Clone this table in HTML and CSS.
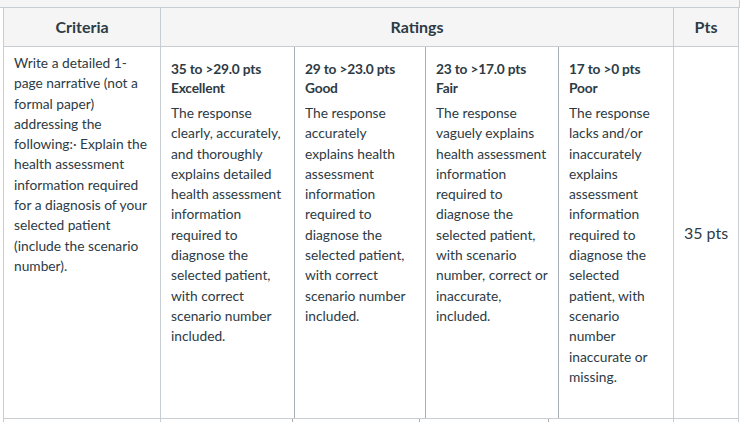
FILE: index.html
```html
<!DOCTYPE html>
<html lang="en">
<head>
<meta charset="utf-8">
<title>Rubric</title>
<link rel="stylesheet" href="styles.css">
</head>
<body>
<div class="strip"></div>
<table class="rubric">
  <thead>
    <tr>
      <th class="h-crit">Criteria</th>
      <th class="h-rat">Ratings</th>
      <th class="h-pts">Pts</th>
    </tr>
  </thead>
  <tbody>
    <tr>
      <td class="crit">Write a detailed 1-page narrative (not a formal paper) addressing the following:· Explain the health assessment information required for a diagnosis of your selected patient (include the scenario number).</td>
      <td class="ratings">
        <div class="tiers">
          <div class="tier t1">
            <div class="tier-title">35 to &gt;29.0 pts</div>
            <div class="tier-title">Excellent</div>
            <div class="tier-desc">The response clearly, accurately, and thoroughly explains detailed health assessment information required to diagnose the selected patient, with correct scenario number included.</div>
          </div>
          <div class="tier t2">
            <div class="tier-title">29 to &gt;23.0 pts</div>
            <div class="tier-title">Good</div>
            <div class="tier-desc">The response accurately explains health assessment information required to diagnose the selected patient, with correct scenario number included.</div>
          </div>
          <div class="tier t3">
            <div class="tier-title">23 to &gt;17.0 pts</div>
            <div class="tier-title">Fair</div>
            <div class="tier-desc">The response vaguely explains health assessment information required to diagnose the selected patient, with scenario number, correct or inaccurate, included.</div>
          </div>
          <div class="tier t4">
            <div class="tier-title">17 to &gt;0 pts</div>
            <div class="tier-title">Poor</div>
            <div class="tier-desc">The response lacks and/or inaccurately explains assessment information required to diagnose the selected patient, with scenario number inaccurate or missing.</div>
          </div>
        </div>
      </td>
      <td class="pts">35 pts</td>
    </tr>
    <tr class="next">
      <td class="crit"></td>
      <td class="ratings">
        <div class="tiers">
          <div class="tier n1"></div>
          <div class="tier n2"></div>
          <div class="tier n3"></div>
          <div class="tier n4"></div>
        </div>
      </td>
      <td class="pts"></td>
    </tr>
  </tbody>
</table>
</body>
</html>
```
FILE: styles.css
```css
* { box-sizing: border-box; }

body {
  margin: 0;
  background: #ffffff;
  font-family: Lato, "Open Sans", "Liberation Sans", sans-serif;
  color: #2d3b45;
  font-size: 13.75px;
}

.strip {
  width: 740px;
  height: 8px;
  background: #f5f5f5;
  border-right: 1px solid #c7cdd1;
  border-bottom: 1px solid #c7cdd1;
}

.rubric {
  margin-left: 3px;
  width: 736px;
  table-layout: fixed;
  border-spacing: 0;
  border-left: 1px solid #c7cdd1;
}

.rubric th,
.rubric td {
  border-right: 1px solid #c7cdd1;
  border-bottom: 1px solid #c7cdd1;
}

.rubric th {
  background: #f5f5f5;
  font-size: 16px;
  font-weight: 700;
  line-height: 22px;
  padding: 8px 10px;
  text-align: center;
}

.h-crit { width: 157px; }
.h-rat { width: 513px; }
.h-pts { width: 65px; }

.crit {
  vertical-align: top;
  padding: 6px 10px;
  line-height: 20.3px;
}

.ratings {
  vertical-align: top;
  padding: 0;
}

.tiers {
  display: flex;
}

.tier {
  flex: none;
  padding: 13px 10px 31px;
  border-right: 1px solid #a5afb5;
}

.tier:last-child { border-right: none; }

.t1 { width: 134px; }
.t2 { width: 131px; }
.t3 { width: 133px; }
.t4 { width: 114px; }

.tier-title {
  font-weight: 700;
  line-height: 18.5px;
  letter-spacing: -0.2px;
}

.tier-desc {
  margin-top: 6px;
  line-height: 20.3px;
}

.pts {
  vertical-align: middle;
  text-align: center;
  font-size: 16px;
}

.next .tier {
  height: 60px;
  padding: 0;
}

.n1 { width: 132px; }
.n2 { width: 127px; }
.n3 { width: 129px; }
.n4 { width: 124px; }
```
